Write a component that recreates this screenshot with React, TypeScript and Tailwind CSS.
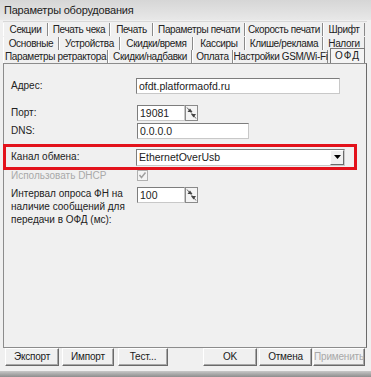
import React from "react";

const row1 = [
  { t: "Секции", w: "w-[45px]" },
  { t: "Печать чека", w: "w-[62px]" },
  { t: "Печать", w: "w-[43px]" },
  { t: "Параметры печати", w: "w-[92px]" },
  { t: "Скорость печати", w: "w-[78px]" },
  { t: "Шрифт", w: "w-[42px]" },
];
const row2 = [
  { t: "Основные", w: "w-[56px]" },
  { t: "Устройства", w: "w-[61px]" },
  { t: "Скидки/время", w: "w-[73px]" },
  { t: "Кассиры", w: "w-[52px]" },
  { t: "Клише/реклама", w: "w-[78px]" },
  { t: "Налоги", w: "w-[42px]" },
];
const row3 = [
  { t: "Параметры ретрактора", w: "w-[105px]" },
  { t: "Скидки/надбавки", w: "w-[84px]" },
  { t: "Оплата", w: "w-[41px]" },
  { t: "Настройки GSM/Wi-Fi", w: "w-[95px]" },
];

function Tab({ t, w }: { t: string; w: string }) {
  return (
    <div
      className={`${w} shrink-0 h-[13px] flex items-center justify-center whitespace-nowrap tracking-[-0.35px] border-r border-r-[#8a8a8a] border-l border-l-white`}
    >
      {t}
    </div>
  );
}

function Spin() {
  return (
    <svg width="13" height="16" viewBox="0 0 13 16" className="block shrink-0">
      <rect x="0.5" y="0.5" width="12" height="15" fill="#f4f4f4" stroke="#8a8a8a" />
      <line x1="2" y1="2.5" x2="11" y2="13.5" stroke="#666" strokeWidth="1" />
      <path d="M2.5 7 L5 3.5 L7.5 7 Z" fill="#444" />
      <path d="M6 9 L11 9 L8.5 12.5 Z" fill="#444" />
    </svg>
  );
}

function Btn({ t, w, disabled }: { t: string; w: string; disabled?: boolean }) {
  return (
    <div
      className={`${w} h-[18px] flex items-center justify-center bg-[#f0f0f0] border border-t-white border-l-white border-r-[#6a6a6a] border-b-[#6a6a6a] shadow-[inset_-1px_-1px_0_#a8a8a8] tracking-[-0.2px] ${
        disabled ? "text-[#a8a8a8]" : "text-[#1a1a1a]"
      }`}
    >
      {t}
    </div>
  );
}

const inputCls =
  "shrink-0 h-[16px] bg-white border border-[#c8c8c8] border-t-[#7d7d7d] border-l-[#7d7d7d] flex items-center pl-[2px] text-[10.5px] leading-none";

export default function App() {
  return (
    <div className="w-[371px] h-[377px] bg-[#f0f0f0] overflow-hidden flex flex-col text-[10px] text-[#222] font-['Liberation_Sans',Arial,sans-serif] leading-none">
      {/* title bar */}
      <div className="h-[20px] shrink-0 bg-gradient-to-b from-[#d6d6d6] to-[#e8e8e8] flex items-center pl-[4px] text-[11px] tracking-[-0.2px] text-[#222]">
        Параметры оборудования
      </div>

      {/* tab control */}
      <div className="ml-[3px] w-[364px] mt-[1px] flex flex-col">
        <div className="flex h-[15px] items-end border-t border-t-[#d8d8d8]">
          {row1.map((r) => (
            <Tab key={r.t} {...r} />
          ))}
        </div>
        <div className="flex h-[14px] items-end">
          {row2.map((r) => (
            <Tab key={r.t} {...r} />
          ))}
        </div>
        <div className="flex h-[13px] items-end">
          {row3.map((r) => (
            <Tab key={r.t} {...r} />
          ))}
          <div className="ml-[2px] w-[35px] h-[15px] shrink-0 flex items-center justify-center border border-[#7a7a7a] border-b-0 bg-[#f4f4f4] tracking-[1px]">
            ОФД
          </div>
        </div>

        {/* page */}
        <div className="h-[285px] border border-[#8c8c8c] border-r-[#6a6a6a] border-b-[#8c8c8c] bg-[#f0f0f0] flex flex-col">
          <div className="flex items-center mt-[14px] h-[16px]">
            <div className="w-[132px] pl-[7px]">Адрес:</div>
            <div className={`${inputCls} w-[204px]`}>ofdt.platformaofd.ru</div>
          </div>
          <div className="flex items-center mt-[11px] h-[16px]">
            <div className="w-[133px] pl-[7px]">Порт:</div>
            <div className={`${inputCls} w-[48px]`}>19081</div>
            <Spin />
          </div>
          <div className="flex items-center mt-[2px] h-[16px]">
            <div className="w-[133px] pl-[7px]">DNS:</div>
            <div className={`${inputCls} w-[112px]`}>0.0.0.0</div>
          </div>
          <div className="mt-[5px] -ml-[1px] w-[354px] h-[26px] border-[3px] border-[#e3121b] flex items-center">
            <div className="w-[130px] pl-[5px]">Канал обмена:</div>
            <div className="w-[209px] h-[17px] shrink-0 bg-white border border-[#c8c8c8] border-t-[#7d7d7d] border-l-[#7d7d7d] flex items-center justify-between pl-[2px] text-[10.5px]">
              <span>EthernetOverUsb</span>
              <div className="w-[14px] h-[15px] bg-[#f0f0f0] border border-t-white border-l-white border-r-[#6a6a6a] border-b-[#6a6a6a] flex items-center justify-center">
                <svg width="7" height="4" viewBox="0 0 7 4">
                  <path d="M0 0 L7 0 L3.5 4 Z" fill="#000" />
                </svg>
              </div>
            </div>
          </div>
          <div className="flex items-center h-[11px]">
            <div className="w-[133px] pl-[7px] text-[#a9a9a9]">Использовать DHCP</div>
            <svg width="11" height="11" viewBox="0 0 11 11" className="block shrink-0">
              <rect x="0.5" y="0.5" width="10" height="10" fill="#f4f4f4" stroke="#b0b0b0" />
              <path d="M2.5 5 L4.5 7.5 L8.5 2.5" fill="none" stroke="#a0a0a0" strokeWidth="1.5" />
            </svg>
          </div>
          <div className="flex items-start mt-[6px]">
            <div className="w-[133px] pl-[7px] leading-[13px]">
              Интервал опроса ФН на
              <br />
              наличие сообщений для
              <br />
              передачи в ОФД (мс):
            </div>
            <div className={`${inputCls} w-[48px]`}>100</div>
            <Spin />
          </div>
        </div>
      </div>

      {/* buttons */}
      <div className="flex pl-[5px]">
        <Btn t="Экспорт" w="w-[54px]" />
        <div className="ml-[3px]">
          <Btn t="Импорт" w="w-[52px]" />
        </div>
        <div className="ml-[4px]">
          <Btn t="Тест..." w="w-[50px]" />
        </div>
        <div className="ml-[35px]">
          <Btn t="OK" w="w-[54px]" />
        </div>
        <div className="ml-[2px]">
          <Btn t="Отмена" w="w-[53px]" />
        </div>
        <div className="ml-[1px]">
          <Btn t="Применить" w="w-[52px]" disabled />
        </div>
      </div>

      <div className="mt-auto h-[6px] bg-gradient-to-b from-[#c8c8c8] to-[#8e8e8e]" />
    </div>
  );
}
